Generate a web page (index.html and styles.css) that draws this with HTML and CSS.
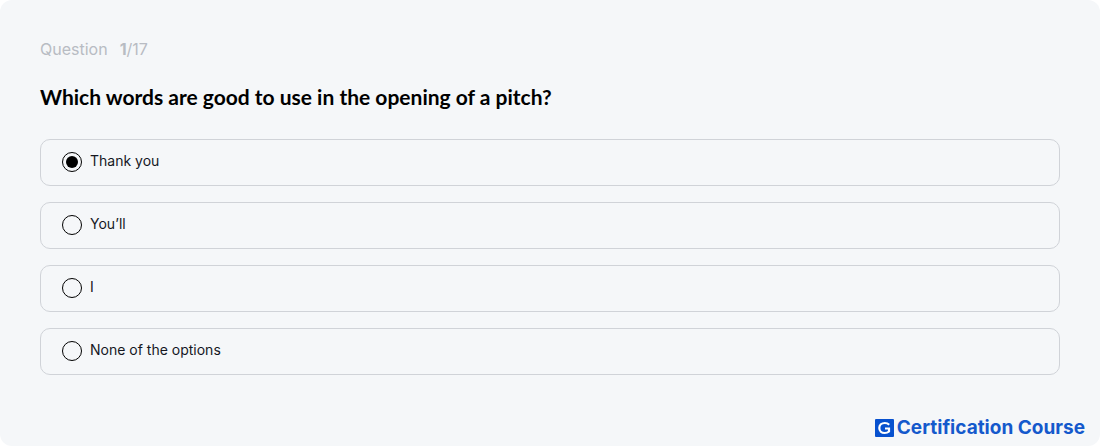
FILE: index.html
```html
<!DOCTYPE html>
<html lang="en">
<head>
<meta charset="utf-8">
<meta name="viewport" content="width=device-width, initial-scale=1">
<title>Certification Course</title>
<link rel="stylesheet" href="styles.css">
</head>
<body>
<main class="quiz">
  <p class="progress"><span>Question</span><span><b>1</b>/17</span></p>
  <form>
    <fieldset class="question">
      <legend class="title">Which words are good to use in the opening of a pitch?</legend>
      <div class="options">
        <label class="option"><input class="radio" type="radio" name="answer" checked><span class="answer">Thank you</span></label>
        <label class="option"><input class="radio" type="radio" name="answer"><span class="answer">You’ll</span></label>
        <label class="option"><input class="radio" type="radio" name="answer"><span class="answer">I</span></label>
        <label class="option"><input class="radio" type="radio" name="answer"><span class="answer">None of the options</span></label>
      </div>
    </fieldset>
  </form>
  <footer class="brand">
    <svg class="logo" viewBox="0 0 19 18" aria-hidden="true">
      <rect width="19" height="18" rx="1" fill="#0751cf"/>
      <path d="M14.200 5.700C13 4.500 11.500 4 9.800 4C6.500 4 4.300 6.100 4.300 9C4.300 12 6.500 14 9.700 14C11.500 14 13 13.400 14 12.500V9.500H10" fill="none" stroke="#fff" stroke-width="2.200"/>
    </svg>
    <span>Certification Course</span>
  </footer>
</main>
</body>
</html>
```

FILE: styles.css
```css
* {
  box-sizing: border-box;
}

body {
  margin: 0;
  background: #fff;
  font-family: Inter, "Liberation Sans", sans-serif;
}

.quiz {
  display: flex;
  flex-direction: column;
  min-height: 100vh;
  padding: 39px 40px 7px;
  border-radius: 12px;
  background: #f5f7f9;
}

.progress {
  display: flex;
  gap: 12px;
  margin: 0 0 24px;
  font-size: 16px;
  line-height: 20px;
  color: #b8bcc3;
}

.question {
  min-width: 0;
  margin: 0;
  padding: 0;
  border: 0;
}

.title {
  margin-bottom: 28px;
  padding: 0;
  font-family: Lato, Inter, sans-serif;
  font-size: 21px;
  font-weight: 700;
  line-height: 28px;
  color: #000;
}

.options {
  display: grid;
  gap: 16px;
}

.option {
  display: flex;
  align-items: center;
  gap: 8px;
  padding: 11px 21px 12px;
  border: 1px solid #d0d3d8;
  border-radius: 10px;
  font-size: 14px;
  line-height: 20px;
  color: #15171f;
}

.answer {
  padding-bottom: 2px;
}

.radio {
  display: grid;
  place-items: center;
  flex: none;
  appearance: none;
  width: 20px;
  height: 20px;
  margin: 0;
  border: 1px solid #000;
  border-radius: 50%;
}

.radio:checked::before {
  content: "";
  width: 12px;
  height: 12px;
  border-radius: 50%;
  background: #000;
}

.brand {
  display: flex;
  align-items: center;
  align-self: flex-end;
  gap: 3px;
  margin-top: auto;
  margin-right: -25px;
  font-size: 19px;
  font-weight: 700;
  line-height: 22px;
  color: #1459cc;
}

.logo {
  width: 19px;
  height: 18px;
}
```
